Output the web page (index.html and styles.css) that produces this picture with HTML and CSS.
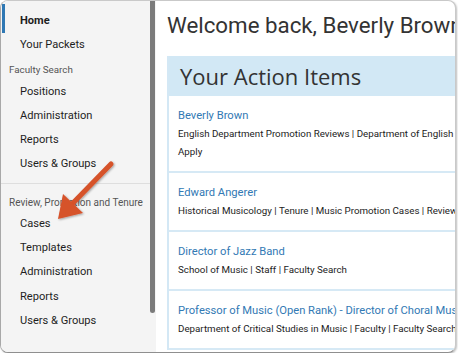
FILE: index.html
```html
<!DOCTYPE html>
<html lang="en">
<head>
  <meta charset="UTF-8" />
  <meta name="viewport" content="width=device-width, initial-scale=1" />
  <title>Home</title>
  <link rel="stylesheet" href="styles.css">
</head>
<body>
  <div class="frame">

    <!-- sidebar -->
    <nav class="sidebar">
      <ul class="nav-group">
        <li class="nav-item active">Home</li>
        <li class="nav-item">Your Packets</li>
      </ul>
      <ul class="nav-group">
        <li class="nav-label">Faculty Search</li>
        <li class="nav-item">Positions</li>
        <li class="nav-item">Administration</li>
        <li class="nav-item">Reports</li>
        <li class="nav-item">Users &amp; Groups</li>
      </ul>
      <ul class="nav-group divided">
        <li class="nav-label">Review, Promotion and Tenure</li>
        <li class="nav-item">Cases</li>
        <li class="nav-item">Templates</li>
        <li class="nav-item">Administration</li>
        <li class="nav-item">Reports</li>
        <li class="nav-item">Users &amp; Groups</li>
      </ul>
      <div class="scroll-thumb"></div>
    </nav>

    <!-- main -->
    <main class="main">
      <h1 class="welcome">Welcome back, Beverly Brown</h1>

      <div class="panel">
        <div class="panel-head">Your Action Items</div>

        <div class="action">
          <a class="action-title">Beverly Brown</a>
          <div class="action-meta">English Department Promotion Reviews | Department of English | Promotion</div>
          <div class="action-meta">Apply</div>
        </div>

        <div class="action">
          <a class="action-title">Edward Angerer</a>
          <div class="action-meta">Historical Musicology | Tenure | Music Promotion Cases | Review</div>
        </div>

        <div class="action">
          <a class="action-title">Director of Jazz Band</a>
          <div class="action-meta">School of Music | Staff | Faculty Search</div>
        </div>

        <div class="action">
          <a class="action-title">Professor of Music (Open Rank) - Director of Choral Music</a>
          <div class="action-meta">Department of Critical Studies in Music | Faculty | Faculty Search</div>
        </div>
      </div>
    </main>

    <!-- annotation arrow -->
    <svg class="arrow" width="70" height="70" viewBox="0 0 70 70">
      <defs>
        <filter id="sh" x="-20%" y="-20%" width="140%" height="140%">
          <feDropShadow dx="1" dy="1" stdDeviation="1" flood-color="#000" flood-opacity="0.35" />
        </filter>
      </defs>
      <g filter="url(#sh)">
        <line x1="60" y1="5" x2="21" y2="45" stroke="#d6522b" stroke-width="5" stroke-linecap="round" />
        <polygon points="7,60 12,35 32,54" fill="#d6522b" />
      </g>
    </svg>
  </div>
</body>
</html>
```

FILE: styles.css
```css
body {
  margin: 0;
  background: #ffffff;
  font-family: Roboto, "Liberation Sans", sans-serif;
}

.frame {
  position: relative;
  display: flex;
  width: 454px;
  height: 351px;
  border: 1px solid #c9c9c9;
  border-left-color: #a8a8a8;
  border-bottom-color: #8f8f8f;
  border-radius: 8px;
  overflow: hidden;
  box-shadow: 1px 1px 2px rgba(0, 0, 0, 0.25);
  background: #ffffff;
}

/* sidebar */

.sidebar {
  position: relative;
  flex: none;
  width: 155px;
  padding-top: 8px;
  background: #f4f4f4;
  box-sizing: border-box;
}

.nav-group {
  list-style: none;
  margin: 0;
  padding: 0;
}

.nav-group + .nav-group {
  margin-top: 2px;
}

.nav-group.divided {
  margin-top: 6px;
  margin-right: 6px;
  padding-top: 8px;
  border-top: 1px solid #dedede;
}

.nav-item {
  position: relative;
  height: 24.3px;
  line-height: 24.3px;
  padding-left: 19px;
  font-size: 11.1px;
  color: #1e1e1e;
  white-space: nowrap;
}

.nav-item.active {
  font-weight: bold;
}

.nav-item.active::before {
  content: "";
  position: absolute;
  left: 1px;
  top: -5px;
  width: 3px;
  height: 29px;
  background: #2f78b4;
}

.nav-label {
  height: 20px;
  line-height: 20px;
  padding-left: 8px;
  font-size: 9.8px;
  color: #555555;
  white-space: nowrap;
}

.nav-group.divided .nav-label {
  font-size: 10px;
  line-height: 22px;
  height: 20px;
}

.scroll-thumb {
  position: absolute;
  top: 0;
  right: 1px;
  width: 5px;
  height: 312px;
  border-radius: 0 0 3px 3px;
  background: #7b7b7b;
}

/* main */

.main {
  flex: 1;
  min-width: 0;
  padding-left: 11px;
  overflow: hidden;
}

.welcome {
  margin: 10px 0 0;
  font-size: 22.3px;
  line-height: 28px;
  font-weight: normal;
  color: #333333;
  white-space: nowrap;
}

.panel {
  width: 330px;
  margin-top: 17px;
  border-left: 2px solid #d4e8f5;
}

.panel-head {
  height: 40px;
  line-height: 40px;
  padding-left: 11px;
  background: #d2e8f5;
  font-family: "Open Sans", sans-serif;
  font-size: 22px;
  color: #333333;
  white-space: nowrap;
}

.action {
  padding: 11px 0 10px 9px;
  border-bottom: 2px solid #d6e9f5;
}

.action-title {
  display: block;
  line-height: 18px;
  font-size: 11.2px;
  color: #3279b4;
  white-space: nowrap;
}

.action-meta {
  line-height: 18px;
  font-size: 9.75px;
  color: #222222;
  white-space: nowrap;
}

.arrow {
  position: absolute;
  left: 50px;
  top: 158px;
}
```
